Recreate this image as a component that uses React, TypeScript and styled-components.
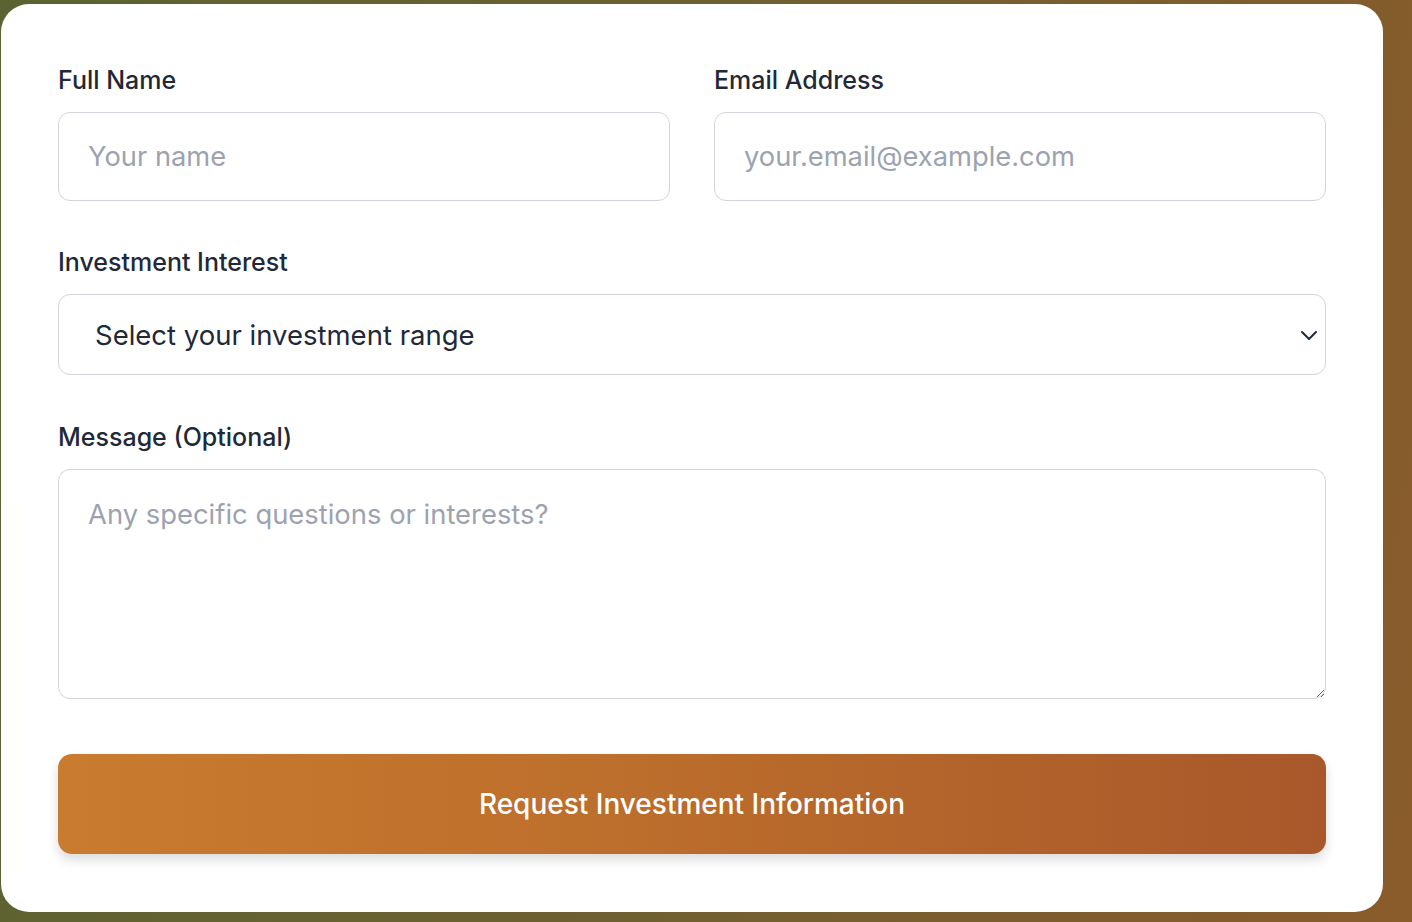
import React from "react";
import styled, { createGlobalStyle } from "styled-components";

const GlobalStyle = createGlobalStyle`
  html, body {
    margin: 0;
    padding: 0;
  }
  body {
    min-height: 922px;
    background: linear-gradient(100deg, #5a6331 0%, #6f6030 50%, #8a5b2b 100%);
    font-family: Inter, "Noto Sans", sans-serif;
  }
`;

const Page = styled.div`
  padding: 4px 29px 10px 1px;
`;

const Card = styled.div`
  background: #ffffff;
  border-radius: 28px;
  padding: 58px 57px 58px 57px;
  height: 908px;
  box-sizing: border-box;
`;

const Form = styled.form`
  display: flex;
  flex-direction: column;
`;

const Row = styled.div`
  display: grid;
  grid-template-columns: 1fr 1fr;
  column-gap: 44px;
`;

const Field = styled.div<{ $gap?: number }>`
  display: flex;
  flex-direction: column;
  margin-bottom: ${(p) => p.$gap ?? 43}px;
`;

const Label = styled.label`
  font-size: 25px;
  line-height: 36px;
  font-weight: 500;
  color: #1f2937;
  margin-bottom: 14px;
`;

const Input = styled.input`
  height: 89px;
  box-sizing: border-box;
  border: 1px solid #d1d5db;
  border-radius: 12px;
  padding: 0 29px;
  font-family: inherit;
  font-size: 27.3px;
  color: #1f2937;
  outline: none;
  &::placeholder {
    color: #9ca3af;
  }
`;

const SelectWrap = styled.div`
  position: relative;
`;

const Select = styled.select`
  width: 100%;
  height: 81px;
  box-sizing: border-box;
  border: 1px solid #d1d5db;
  border-radius: 12px;
  padding: 0 36px;
  background: #ffffff;
  font-family: inherit;
  font-size: 27.5px;
  color: #1f2937;
  appearance: none;
  outline: none;
`;

const Chevron = styled.svg`
  position: absolute;
  right: 5px;
  top: 50%;
  transform: translateY(-50%);
  pointer-events: none;
`;

const TextArea = styled.textarea`
  height: 230px;
  box-sizing: border-box;
  border: 1px solid #d1d5db;
  border-radius: 12px;
  padding: 25px 29px;
  font-family: inherit;
  font-size: 27.4px;
  line-height: 1.4;
  color: #1f2937;
  outline: none;
  resize: vertical;
  &::placeholder {
    color: #9ca3af;
  }
`;

const Button = styled.button`
  height: 100px;
  border: none;
  border-radius: 14px;
  background: linear-gradient(90deg, #c97b2f 0%, #bc6e2c 45%, #a8582a 100%);
  box-shadow: 0 6px 12px rgba(0, 0, 0, 0.14);
  color: #ffffff;
  font-family: inherit;
  font-size: 28px;
  font-weight: 500;
  cursor: pointer;
`;

export default function App() {
  return (
    <>
      <GlobalStyle />
      <Page>
        <Card>
          <Form onSubmit={(e) => e.preventDefault()}>
            <Row>
              <Field>
                <Label>Full Name</Label>
                <Input type="text" placeholder="Your name" />
              </Field>
              <Field>
                <Label>Email Address</Label>
                <Input type="email" placeholder="your.email@example.com" />
              </Field>
            </Row>
            <Field $gap={44}>
              <Label>Investment Interest</Label>
              <SelectWrap>
                <Select defaultValue="">
                  <option value="">Select your investment range</option>
                  <option value="a">$10,000 - $50,000</option>
                  <option value="b">$50,000 - $250,000</option>
                  <option value="c">$250,000+</option>
                </Select>
                <Chevron width="24" height="24" viewBox="0 0 24 24" fill="none">
                  <path
                    d="M5 9l7 7 7-7"
                    stroke="#1f2937"
                    strokeWidth="2"
                    strokeLinecap="round"
                    strokeLinejoin="round"
                  />
                </Chevron>
              </SelectWrap>
            </Field>
            <Field $gap={55}>
              <Label>Message (Optional)</Label>
              <TextArea placeholder="Any specific questions or interests?" />
            </Field>
            <Button type="submit">Request Investment Information</Button>
          </Form>
        </Card>
      </Page>
    </>
  );
}
